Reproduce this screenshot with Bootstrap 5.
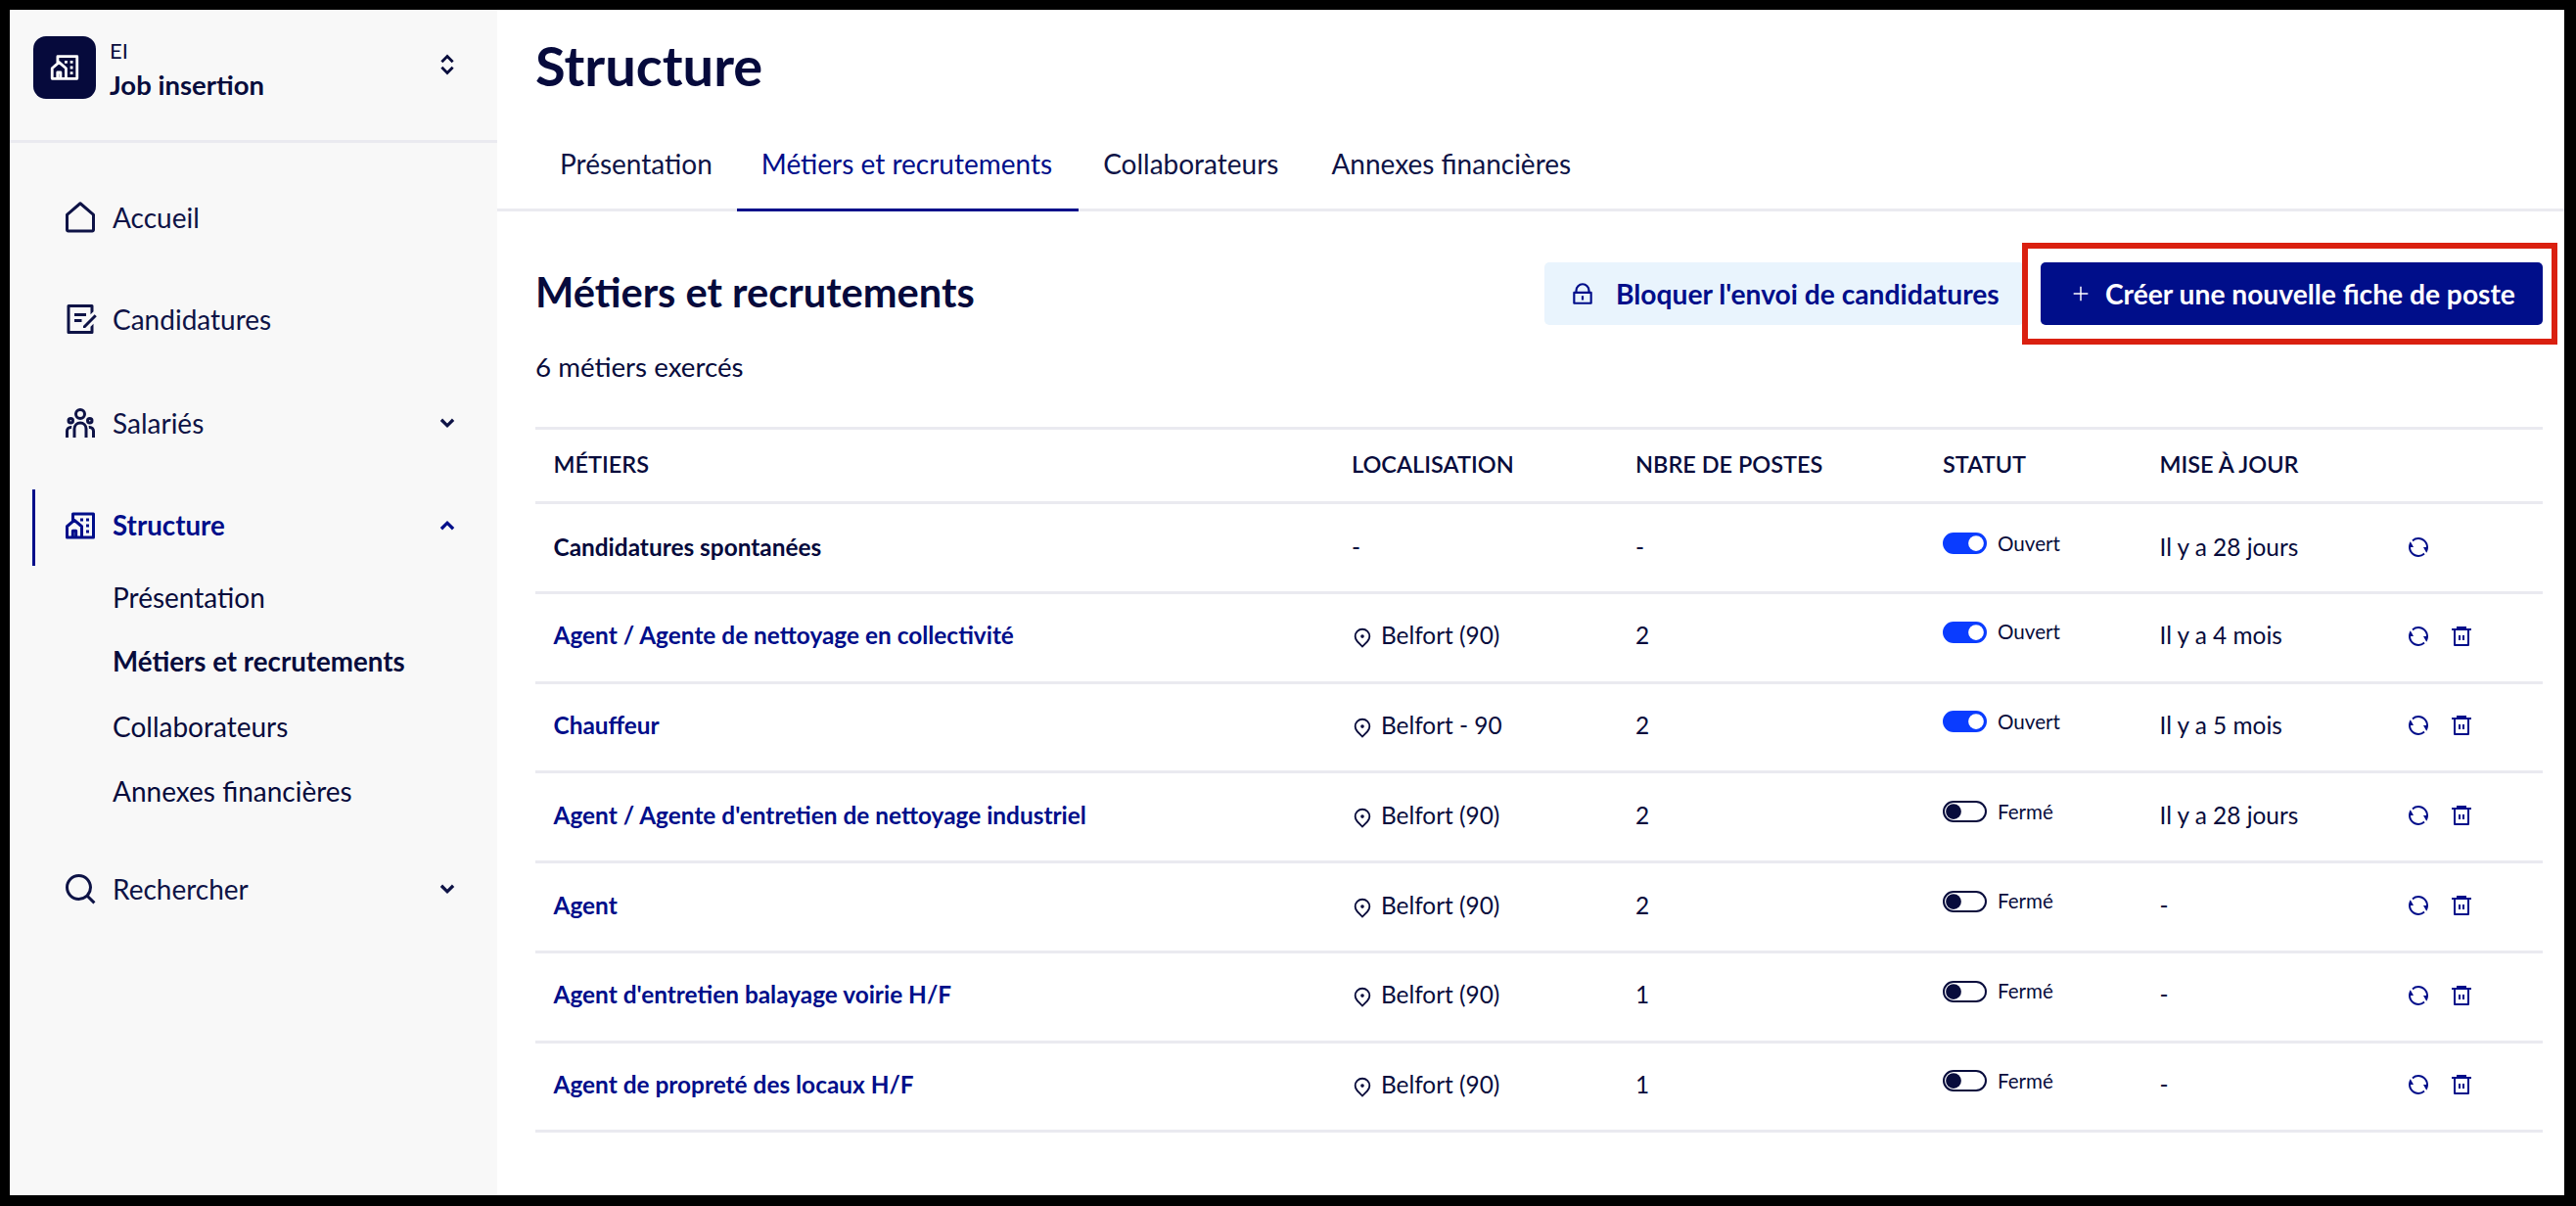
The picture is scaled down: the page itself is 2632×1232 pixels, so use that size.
<!doctype html>
<html lang="fr">
<head>
<meta charset="utf-8">
<title>Structure</title>
<link href="https://cdn.jsdelivr.net/npm/bootstrap@5.3.0/dist/css/bootstrap.min.css" rel="stylesheet">
<style>
html,body{height:100%}
body{background:#000;font-family:"Lato","Open Sans",sans-serif;color:#080c3c;padding:10px 12px 11px 10px;overflow:hidden}
svg{fill:currentColor;flex:none}
.app-frame{height:1211px;background:#fff;position:relative}
.side-col{width:498px;background:#f8f8f8;flex:none}
.org-head{height:136px;padding:27px 38px 0 24px;border-bottom:3px solid #eaeaf0}
.org-tile{width:64px;height:64px;border-radius:13px;background:#060a3c;color:#fff}
.org-text{margin-left:14px;padding-top:1px}
.org-kind{font-size:22px;line-height:28px}
.org-name{font-size:27.5px;line-height:42px;font-weight:700}
.chev{width:26px;height:26px}
.side-list{padding:37px 38px 0 23px}
.side-item{height:78px;margin-bottom:26px;padding-left:28px;border-left:3px solid transparent;font-size:28px;color:#0e1346;gap:15px}
.side-item svg.nav-ico{width:36px;height:36px}
.side-item.mb-mid{margin-bottom:28px}
.side-item.mb-wide{margin-bottom:29px}
.side-item.is-current{border-left-color:#000e8a;color:#000e8a;font-weight:700;font-size:27.7px;margin-bottom:0;padding-bottom:4px}
.side-sub{padding-left:82px;margin:-1px 0 28px}
.side-sub a{display:flex;align-items:center;height:66px;font-size:28px;color:#0e1346;text-decoration:none}
.side-sub a.is-on{font-weight:700;font-size:27.7px;color:#080c3c}
.main-col{min-width:0}
.page-h{font-size:56px;line-height:62px;font-weight:700;margin:0;padding:26px 0 0 39px;height:111px;color:#060a3c}
.tab-row{height:95px;border-bottom:3px solid #eaeaf0;padding-left:39px;flex-wrap:nowrap}
.tab-row .nav-link{height:95px;padding:0 25px;display:flex;align-items:center;font-size:28px;color:#0e1346;border-bottom:3px solid transparent;border-radius:0;white-space:nowrap}
.tab-row .nav-link.active{color:#000e8a;border-bottom-color:#000e8a;padding-right:27px;margin-right:0}
.tab-row .nav-item:nth-child(3) .nav-link{padding-right:29px}
.body-pane{padding:52px 22px 0 39px}
.sec-h{font-size:41.6px;font-weight:700;margin:-3px 0 0;color:#060a3c}
.btn-soft,.btn-solid{height:64px;font-size:28.2px;font-weight:700;border:0;border-radius:5px;display:inline-flex;align-items:center;white-space:nowrap}
.btn-soft{background:#e9f4fd;color:#000e8a;width:490px;padding:0 0 0 26px;gap:21px}
.btn-solid{background:#000e8a;color:#fff;width:513px;margin-left:17px;padding:0 0 0 30px;gap:14px}
.btn-soft:hover{background:#e9f4fd;color:#000e8a}
.btn-solid:hover{background:#000e8a;color:#fff}
.red-mark{position:absolute;left:2056px;top:238px;width:547px;height:104px;border:6px solid #da2010;pointer-events:none}
.count-line{font-size:27.7px;margin:27px 0 0;line-height:32px;height:46px}
.jobs-table{table-layout:fixed;width:2051px;margin:31px 0 0;border-top:3px solid #eaeaf0;color:#080c3c}
.jobs-table>*>tr>*{border-bottom:3px solid #eaeaf0;padding:0 0 0 20px;vertical-align:middle;background:transparent}
.jobs-table>*>tr>*:first-child{padding-left:18.5px}
.jobs-table>*>tr>*:nth-child(5){padding-left:18.5px}
.jobs-table thead th{height:76px;font-size:23.5px;font-weight:600;text-transform:uppercase;padding-bottom:2px}
.jobs-table tbody td{height:91.75px;font-size:24.4px;padding-bottom:3px}
.jobs-table tbody tr:first-child td{padding-bottom:0}
.job-link{color:#000e8a;font-weight:700;text-decoration:none}
.job-plain{font-weight:700;color:#060a3c}
.col-a{width:814px}.col-b{width:290px}.col-c{width:314px}.col-d{width:223px}.col-e{width:253px}.col-f{width:157px}
.pin{width:22px;height:22px;margin:0 8px 0 0;vertical-align:-4px}
.state{font-size:20.6px;gap:11px;margin-top:-8px}
.state .form-check-input{width:45px;height:22px;margin:0;float:none;border:2px solid #080c3c;background-color:#fff;background-image:url("data:image/svg+xml,%3csvg xmlns='http://www.w3.org/2000/svg' viewBox='-4 -4 8 8'%3e%3ccircle r='3.5' fill='%23080c3c'/%3e%3c/svg%3e")}
.state .form-check-input:checked{background-color:#0a3cff;border-color:#0a3cff;background-image:url("data:image/svg+xml,%3csvg xmlns='http://www.w3.org/2000/svg' viewBox='-4 -4 8 8'%3e%3ccircle r='3.5' fill='%23fff'/%3e%3c/svg%3e")}
.state.form-switch{padding-left:0;min-height:0;margin-bottom:0}
.act{color:#000e8a;width:24px;height:24px}
.act-row{gap:20px;margin-left:-2px}
</style>
</head>
<body>
<svg width="0" height="0" class="position-absolute">
<defs>
<symbol id="i-comm" viewBox="0 0 24 24"><path fill="none" stroke="currentColor" stroke-width="2" stroke-linejoin="round" d="M7 8.8V4h14v16H3v-7.5l5-4.3 5 4.3V20M6.9 20v-4.5h2.2V20"/><path d="M16 7h2v2h-2zM16 11h2v2h-2zM16 15h2v2h-2zM12 7h2v2h-2z"/></symbol>
<symbol id="i-home" viewBox="0 0 24 24"><path fill="none" stroke="currentColor" stroke-width="2" stroke-linejoin="round" d="M3 10.2 12 2.5l9 7.7V20.5a.8.8 0 0 1-.8.8H3.8a.8.8 0 0 1-.8-.8z"/></symbol>
<symbol id="i-draft" viewBox="0 0 24 24"><path d="M20 2a1 1 0 0 1 1 1v3.757l-2 2V4H5v16h14v-2.758l2-2V21a1 1 0 0 1-1 1H4a1 1 0 0 1-1-1V3a1 1 0 0 1 1-1h16zm1.778 6.808l1.414 1.414L15.414 18l-1.416-.002.002-1.412 7.778-7.778zM13 12v2H8v-2h5zm3-4v2H8V8h8z"/></symbol>
<symbol id="i-team" viewBox="0 0 24 24"><path d="M12 11a5 5 0 0 1 5 5v6h-2v-6a3 3 0 0 0-2.824-2.995L12 13a3 3 0 0 0-2.995 2.824L9 16v6H7v-6a5 5 0 0 1 5-5zm-6.5 3c.279 0 .55.033.81.094a5.947 5.947 0 0 0-.301 1.575L6 16v.086a1.492 1.492 0 0 0-.356-.08L5.5 16a1.5 1.5 0 0 0-1.493 1.356L4 17.5V22H2v-4.5A3.5 3.5 0 0 1 5.5 14zm13 0a3.5 3.5 0 0 1 3.5 3.5V22h-2v-4.5a1.5 1.5 0 0 0-1.356-1.493L18.5 16c-.175 0-.343.03-.5.085V16c0-.666-.108-1.306-.309-1.904.259-.063.53-.096.809-.096zm-13-6a2.5 2.5 0 1 1 0 5 2.5 2.5 0 0 1 0-5zm13 0a2.5 2.5 0 1 1 0 5 2.5 2.5 0 0 1 0-5zm-13 2a.5.5 0 1 0 0 1 .5.5 0 0 0 0-1zm13 0a.5.5 0 1 0 0 1 .5.5 0 0 0 0-1zM12 2a4 4 0 1 1 0 8 4 4 0 0 1 0-8zm0 2a2 2 0 1 0 0 4 2 2 0 0 0 0-4z"/></symbol>
<symbol id="i-search" viewBox="0 0 24 24"><path d="M18.031 16.617l4.283 4.282-1.415 1.415-4.282-4.283A8.96 8.96 0 0 1 11 20c-4.968 0-9-4.032-9-9s4.032-9 9-9 9 4.032 9 9a8.96 8.96 0 0 1-1.969 5.617zm-2.006-.742A6.977 6.977 0 0 0 18 11c0-3.868-3.133-7-7-7-3.868 0-7 3.132-7 7 0 3.867 3.132 7 7 7a6.977 6.977 0 0 0 4.875-1.975l.15-.15z"/></symbol>
<symbol id="i-down" viewBox="0 0 24 24"><path fill="none" stroke="currentColor" stroke-width="3" d="M6.4 9 12 14.6 17.6 9"/></symbol>
<symbol id="i-up" viewBox="0 0 24 24"><path fill="none" stroke="currentColor" stroke-width="3" d="M6.4 15 12 9.4 17.6 15"/></symbol>
<symbol id="i-updown" viewBox="0 0 24 24"><path fill="none" stroke="currentColor" stroke-width="2.6" d="M6.8 9.4 12 4.2l5.2 5.2M6.8 14.6 12 19.8l5.2-5.2"/></symbol>
<symbol id="i-lock" viewBox="0 0 24 24"><path d="M19 10h1a1 1 0 0 1 1 1v10a1 1 0 0 1-1 1H4a1 1 0 0 1-1-1V11a1 1 0 0 1 1-1h1V9a7 7 0 1 1 14 0v1zM5 12v8h14v-8H5zm6 2h2v4h-2v-4zm6-4V9A5 5 0 0 0 7 9v1h10z"/></symbol>
<symbol id="i-plus" viewBox="0 0 24 24"><path d="M11.2 11.2V4h1.6v7.2H20v1.6h-7.2V20h-1.6v-7.2H4v-1.6z"/></symbol>
<symbol id="i-pin" viewBox="0 0 24 24"><path d="M12 23.728l-6.364-6.364a9 9 0 1 1 12.728 0L12 23.728zm4.95-7.778a7 7 0 1 0-9.9 0L12 20.9l4.95-4.95zM12 13a2 2 0 1 1 0-4 2 2 0 0 1 0 4z"/></symbol>
<symbol id="i-refresh" viewBox="0 0 24 24"><path d="M5.463 4.433A9.961 9.961 0 0 1 12 2c5.523 0 10 4.477 10 10 0 2.136-.67 4.116-1.81 5.74L17 12h3A8 8 0 0 0 6.46 6.228l-.997-1.795zm13.074 15.134A9.961 9.961 0 0 1 12 22C6.477 22 2 17.523 2 12c0-2.136.67-4.116 1.81-5.74L7 12H4a8 8 0 0 0 13.54 5.772l.997 1.795z"/></symbol>
<symbol id="i-bin" viewBox="0 0 24 24"><path d="M7 4V2h10v2h5v2h-2v15a1 1 0 0 1-1 1H5a1 1 0 0 1-1-1V6H2V4h5zM6 6v14h12V6H6zm3 5h2v5H9v-5zm4 0h2v5h-2v-5z"/></symbol>
</defs>
</svg>
<div class="app-frame d-flex">
  <aside class="side-col d-flex flex-column">
    <div class="org-head d-flex align-items-start">
      <div class="org-tile d-flex align-items-center justify-content-center"><svg width="34" height="34"><use href="#i-comm"/></svg></div>
      <div class="org-text flex-grow-1"><div class="org-kind">EI</div><div class="org-name">Job insertion</div></div>
      <svg class="chev mt-3"><use href="#i-updown"/></svg>
    </div>
    <nav class="side-list d-flex flex-column">
      <a class="side-item d-flex align-items-center text-decoration-none"><svg class="nav-ico"><use href="#i-home"/></svg><span class="flex-grow-1">Accueil</span></a>
      <a class="side-item mb-mid d-flex align-items-center text-decoration-none"><svg class="nav-ico"><use href="#i-draft"/></svg><span class="flex-grow-1">Candidatures</span></a>
      <a class="side-item mb-wide d-flex align-items-center text-decoration-none"><svg class="nav-ico"><use href="#i-team"/></svg><span class="flex-grow-1">Salariés</span><svg class="chev"><use href="#i-down"/></svg></a>
      <a class="side-item is-current d-flex align-items-center text-decoration-none"><svg class="nav-ico"><use href="#i-comm"/></svg><span class="flex-grow-1">Structure</span><svg class="chev"><use href="#i-up"/></svg></a>
      <div class="side-sub">
        <a>Présentation</a><a class="is-on">Métiers et recrutements</a><a>Collaborateurs</a><a>Annexes financières</a>
      </div>
      <a class="side-item d-flex align-items-center text-decoration-none"><svg class="nav-ico"><use href="#i-search"/></svg><span class="flex-grow-1">Rechercher</span><svg class="chev"><use href="#i-down"/></svg></a>
    </nav>
  </aside>
  <main class="main-col flex-grow-1">
    <h1 class="page-h">Structure</h1>
    <ul class="nav tab-row">
      <li class="nav-item"><a class="nav-link">Présentation</a></li>
      <li class="nav-item"><a class="nav-link active">Métiers et recrutements</a></li>
      <li class="nav-item"><a class="nav-link">Collaborateurs</a></li>
      <li class="nav-item"><a class="nav-link">Annexes financières</a></li>
    </ul>
    <div class="body-pane">
      <div class="d-flex align-items-center justify-content-between">
        <h2 class="sec-h">Métiers et recrutements</h2>
        <div class="d-flex">
          <button class="btn btn-soft"><svg width="26" height="26"><use href="#i-lock"/></svg>Bloquer l'envoi de candidatures</button>
          <button class="btn btn-solid"><svg width="22" height="22"><use href="#i-plus"/></svg>Créer une nouvelle fiche de poste</button>
        </div>
      </div>
      <p class="count-line">6 métiers exercés</p>
      <table class="table jobs-table">
        <colgroup><col class="col-a"><col class="col-b"><col class="col-c"><col class="col-d"><col class="col-e"><col class="col-f"></colgroup>
        <thead><tr><th>Métiers</th><th>Localisation</th><th>Nbre de postes</th><th>Statut</th><th>Mise à jour</th><th></th></tr></thead>
        <tbody>
          <tr><td class="job-plain">Candidatures spontanées</td><td>-</td><td>-</td>
            <td><div class="state form-check form-switch d-flex align-items-center"><input class="form-check-input" type="checkbox" role="switch" checked aria-label="Statut"><span>Ouvert</span></div></td>
            <td>Il y a 28 jours</td><td><div class="act-row d-flex"><svg class="act"><use href="#i-refresh"/></svg></div></td></tr>
          <tr><td><a class="job-link" href="#">Agent / Agente de nettoyage en collectivité</a></td><td><svg class="pin"><use href="#i-pin"/></svg>Belfort (90)</td><td>2</td>
            <td><div class="state form-check form-switch d-flex align-items-center"><input class="form-check-input" type="checkbox" role="switch" checked aria-label="Statut"><span>Ouvert</span></div></td>
            <td>Il y a 4 mois</td><td><div class="act-row d-flex"><svg class="act"><use href="#i-refresh"/></svg><svg class="act"><use href="#i-bin"/></svg></div></td></tr>
          <tr><td><a class="job-link" href="#">Chauffeur</a></td><td><svg class="pin"><use href="#i-pin"/></svg>Belfort - 90</td><td>2</td>
            <td><div class="state form-check form-switch d-flex align-items-center"><input class="form-check-input" type="checkbox" role="switch" checked aria-label="Statut"><span>Ouvert</span></div></td>
            <td>Il y a 5 mois</td><td><div class="act-row d-flex"><svg class="act"><use href="#i-refresh"/></svg><svg class="act"><use href="#i-bin"/></svg></div></td></tr>
          <tr><td><a class="job-link" href="#">Agent / Agente d'entretien de nettoyage industriel</a></td><td><svg class="pin"><use href="#i-pin"/></svg>Belfort (90)</td><td>2</td>
            <td><div class="state form-check form-switch d-flex align-items-center"><input class="form-check-input" type="checkbox" role="switch" aria-label="Statut"><span>Fermé</span></div></td>
            <td>Il y a 28 jours</td><td><div class="act-row d-flex"><svg class="act"><use href="#i-refresh"/></svg><svg class="act"><use href="#i-bin"/></svg></div></td></tr>
          <tr><td><a class="job-link" href="#">Agent</a></td><td><svg class="pin"><use href="#i-pin"/></svg>Belfort (90)</td><td>2</td>
            <td><div class="state form-check form-switch d-flex align-items-center"><input class="form-check-input" type="checkbox" role="switch" aria-label="Statut"><span>Fermé</span></div></td>
            <td>-</td><td><div class="act-row d-flex"><svg class="act"><use href="#i-refresh"/></svg><svg class="act"><use href="#i-bin"/></svg></div></td></tr>
          <tr><td><a class="job-link" href="#">Agent d'entretien balayage voirie H/F</a></td><td><svg class="pin"><use href="#i-pin"/></svg>Belfort (90)</td><td>1</td>
            <td><div class="state form-check form-switch d-flex align-items-center"><input class="form-check-input" type="checkbox" role="switch" aria-label="Statut"><span>Fermé</span></div></td>
            <td>-</td><td><div class="act-row d-flex"><svg class="act"><use href="#i-refresh"/></svg><svg class="act"><use href="#i-bin"/></svg></div></td></tr>
          <tr><td><a class="job-link" href="#">Agent de propreté des locaux H/F</a></td><td><svg class="pin"><use href="#i-pin"/></svg>Belfort (90)</td><td>1</td>
            <td><div class="state form-check form-switch d-flex align-items-center"><input class="form-check-input" type="checkbox" role="switch" aria-label="Statut"><span>Fermé</span></div></td>
            <td>-</td><td><div class="act-row d-flex"><svg class="act"><use href="#i-refresh"/></svg><svg class="act"><use href="#i-bin"/></svg></div></td></tr>
        </tbody>
      </table>
    </div>
  </main>
  <div class="red-mark"></div>
</div>
<script src="https://cdn.jsdelivr.net/npm/bootstrap@5.3.0/dist/js/bootstrap.bundle.min.js"></script>
</body>
</html>
